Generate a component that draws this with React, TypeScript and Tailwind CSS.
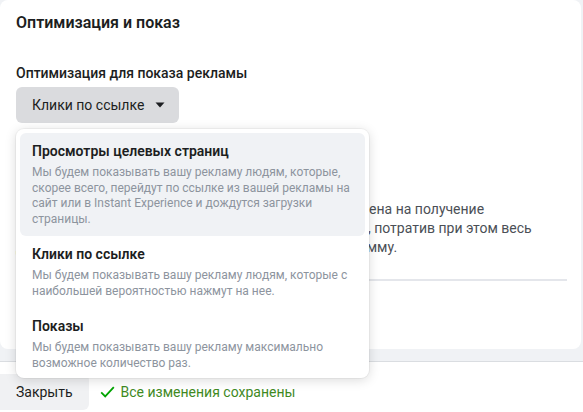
import { useState } from 'react';

const options = [
  {
    title: 'Просмотры целевых страниц',
    text: 'Мы будем показывать вашу рекламу людям, которые, скорее всего, перейдут по ссылке из вашей рекламы на сайт или в Instant Experience и дождутся загрузки страницы.',
  },
  {
    title: 'Клики по ссылке',
    text: 'Мы будем показывать вашу рекламу людям, которые с наибольшей вероятностью нажмут на нее.',
  },
  {
    title: 'Показы',
    text: 'Мы будем показывать вашу рекламу максимально возможное количество раз.',
  },
];

function Caret() {
  return (
    <svg width="10" height="6" viewBox="0 0 10 6" className="shrink-0">
      <path d="M0.5 0.5h9L5 5.5z" fill="#1c1e21" />
    </svg>
  );
}

export default function App() {
  const [hovered, setHovered] = useState(0);

  return (
    <div className="h-[412px] w-[583px] overflow-hidden bg-[#f0f2f5] flex flex-col font-['Roboto',sans-serif] text-[#1c1e21]">
      <div className="relative w-[581px] h-[349px] shrink-0 bg-white rounded-lg pl-4 pr-[14px] pt-[12px]">
        <h2 className="text-[16px] leading-[22px] font-semibold">Оптимизация и показ</h2>

        <div className="mt-[29px] text-[14px] leading-5 font-medium text-[#1c1e21]">Оптимизация для показа рекламы</div>
        <button className="mt-1 h-9 flex items-center gap-[11px] pl-4 pr-[14px] rounded-md bg-[#dadbde] text-[14px] text-[#1c1e21]">
          Клики по ссылке
          <Caret />
        </button>

        {/* description under the open menu, mostly covered by it */}
        <div className="mt-[77px] text-[14px] leading-[19px] text-[#4b4f56] whitespace-nowrap">
          <div>Ставка для вашей группы объявлений будет направлена на получение</div>
          <div>наибольшего общего количества кликов по ссылкам, потратив при этом весь</div>
          <div>дневной бюджет или заданную вами наибольшую сумму.</div>
        </div>

        <div className="mt-[22px] h-[2px] bg-[#e4e6eb]" />

        <div className="absolute left-4 top-[129px] w-[353px] h-[249px] overflow-hidden bg-white rounded-lg p-1 shadow-[0_2px_12px_rgba(0,0,0,0.15),0_0_0_1px_rgba(0,0,0,0.04)] z-10">
          {options.map((o, i) => (
            <div
              key={o.title}
              onMouseEnter={() => setHovered(i)}
              className={`px-3 pt-2 pb-[9px] rounded-md ${hovered === i ? 'bg-[#f0f2f5]' : ''}`}
            >
              <div className="text-[14px] leading-5 font-semibold text-[#1c1e21]">{o.title}</div>
              <div className="mt-1 text-[12px] leading-[15.5px] text-[#8d949e]">{o.text}</div>
            </div>
          ))}
        </div>
      </div>

      <div className="h-[12px] shrink-0" />

      <div className="flex-1 bg-white border-t border-[#dadde1] flex items-start pt-3 gap-[11px]">
        <button className="h-9 px-4 rounded-r-md bg-[#f0f1f3] text-[14px] text-[#1c1e21]">Закрыть</button>
        <div className="h-9 flex items-center gap-[6px] text-[14px] text-[#3f8a1f]">
          <svg width="15" height="12" viewBox="0 0 15 12">
            <path d="M1.2 6.4l4 4 8.6-9.2" fill="none" stroke="#00a400" strokeWidth="1.8" />
          </svg>
          Все изменения сохранены
        </div>
      </div>
    </div>
  );
}
